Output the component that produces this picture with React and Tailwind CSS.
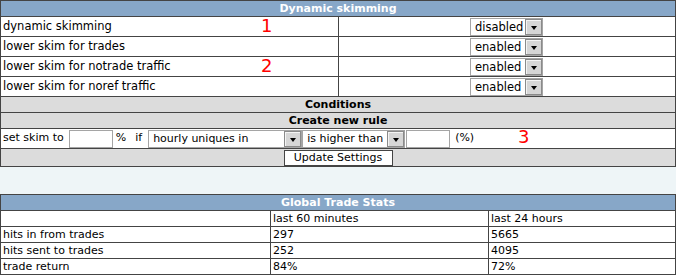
import React from 'react';

const Select = ({ value, width }) => {
  return (
    <div className={`flex h-[18px] ${width} items-stretch border border-[#a5a5a5] bg-white`}>
      <div className="flex-1 pl-[4px] leading-[16px] truncate">{value}</div>
      <div className="flex w-[17px] items-end justify-center border border-[#8a8a8a] bg-[#d6d6d6] pb-[4px] shadow-[inset_1px_1px_0_#f4f4f4]">
        <div className="h-0 w-0 border-x-[3.5px] border-t-[4px] border-x-transparent border-t-black" />
      </div>
    </div>
  );
};

const settings = [
  { label: 'dynamic skimming', value: 'disabled' },
  { label: 'lower skim for trades', value: 'enabled' },
  { label: 'lower skim for notrade traffic', value: 'enabled' },
  { label: 'lower skim for noref traffic', value: 'enabled' },
];

const stats = [
  { label: 'hits in from trades', hour: '297', day: '5665' },
  { label: 'hits sent to trades', hour: '252', day: '4095' },
  { label: 'trade return', hour: '84%', day: '72%' },
];

const App = () => {
  return (
    <div className="relative h-[275px] w-[676px] overflow-hidden bg-[#eef5f7] font-['DejaVu_Sans','Verdana',sans-serif] text-[11px] text-black">
      {/* Dynamic skimming */}
      <div className="border border-[#444]">
        <div className="h-[15px] bg-[#87a7c8] text-center font-bold leading-[15px] text-white">
          Dynamic skimming
        </div>
        {settings.map(row => (
          <div key={row.label} className="flex h-[20px] border-t border-[#444] bg-white text-[11.5px]">
            <div className="w-[338px] border-r border-[#444] pl-[2px] leading-[19px]">{row.label}</div>
            <div className="flex flex-1 items-center justify-center pr-[1px]">
              <Select value={row.value} width="w-[73px]" />
            </div>
          </div>
        ))}
        <div className="h-[16px] border-t border-[#444] bg-[#dcdcdc] text-center font-bold leading-[15px]">
          Conditions
        </div>
        <div className="h-[16px] border-t border-[#444] bg-[#dcdcdc] text-center font-bold leading-[15px]">
          Create new rule
        </div>
        <div className="flex h-[20px] items-center border-t border-[#444] bg-white pl-[2px]">
          <span>set skim to</span>
          <div className="ml-[5px] h-[18px] w-[44px] border border-[#a5a5a5] bg-white" />
          <span className="ml-[3px]">%</span>
          <span className="ml-[9px]">if</span>
          <div className="ml-[6px]">
            <Select value="hourly uniques in" width="w-[154px]" />
          </div>
          <Select value="is higher than" width="w-[103px]" />
          <div className="ml-[1px] h-[18px] w-[44px] border border-[#a5a5a5] bg-white" />
          <span className="ml-[5px]">(%)</span>
        </div>
        <div className="flex h-[18px] items-end justify-center border-t border-[#444] bg-[#dcdcdc]">
          <button className="h-[16px] w-[109px] border border-[#444] bg-white text-[11px] leading-[14px]">
            Update Settings
          </button>
        </div>
      </div>

      {/* Global Trade Stats */}
      <div className="mt-[27px] border border-[#444]">
        <div className="h-[15px] bg-[#87a7c8] text-center font-bold leading-[15px] text-white">
          Global Trade Stats
        </div>
        <div className="flex h-[16px] border-t border-[#444] bg-white leading-[15px]">
          <div className="w-[270px] border-r border-[#444] pl-[2px]" />
          <div className="w-[218px] border-r border-[#444] pl-[2px]">last 60 minutes</div>
          <div className="flex-1 pl-[2px]">last 24 hours</div>
        </div>
        {stats.map(row => (
          <div key={row.label} className="flex h-[16px] border-t border-[#444] bg-white leading-[15px]">
            <div className="w-[270px] border-r border-[#444] pl-[2px]">{row.label}</div>
            <div className="w-[218px] border-r border-[#444] pl-[2px]">{row.hour}</div>
            <div className="flex-1 pl-[2px]">{row.day}</div>
          </div>
        ))}
      </div>

      {/* annotations */}
      <span className="absolute left-[261px] top-[15px] text-[18px] leading-[22px] text-[#ff0000]">1</span>
      <span className="absolute left-[261px] top-[55px] text-[18px] leading-[22px] text-[#ff0000]">2</span>
      <span className="absolute left-[518px] top-[126px] text-[18px] leading-[22px] text-[#ff0000]">3</span>
    </div>
  );
};

export default App;
